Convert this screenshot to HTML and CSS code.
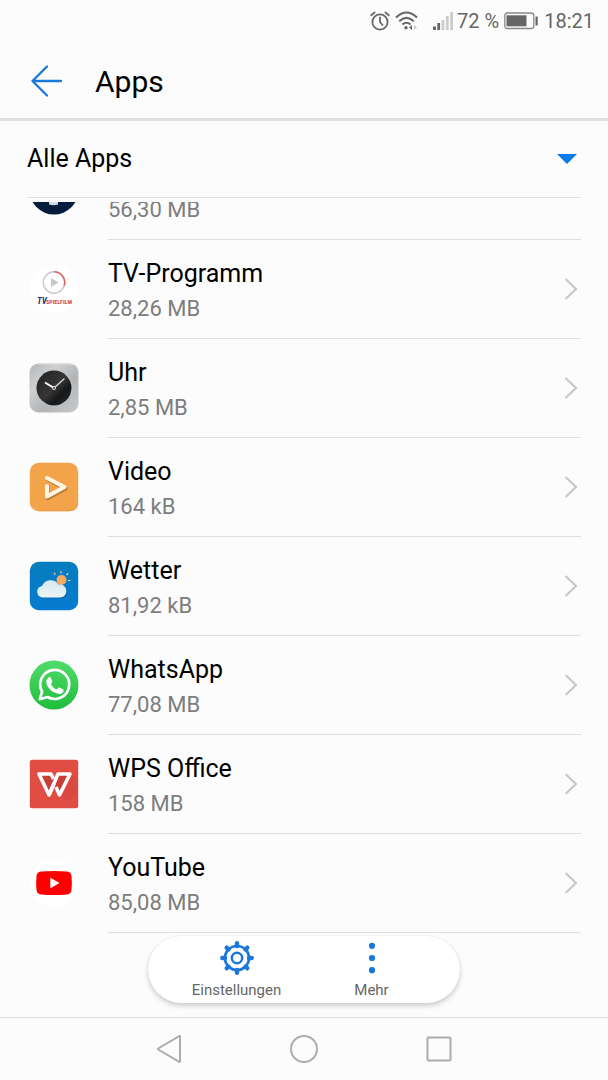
FILE: index.html
```html
<!DOCTYPE html>
<html lang="de">
<head>
<meta charset="utf-8">
<meta name="viewport" content="width=device-width, initial-scale=1">
<title>Apps</title>
<link rel="stylesheet" href="styles.css">
</head>
<body>
<div class="status">
  <svg width="20" height="20" viewBox="0 0 20 20" fill="none" stroke="#666" stroke-width="1.8" stroke-linecap="round"><circle cx="10" cy="11" r="7.6"/><path d="M10 6.500V11l2.500 3M1.200 4.200 4.600 1.500M18.800 4.200 15.400 1.500"/></svg>
  <svg class="wifi" width="23" height="20" viewBox="0 0 23 20" fill="none" stroke="#666" stroke-width="2"><path d="M1 6.500Q11.500-3.500 22 6.500M4.200 10.200Q11.500 3.500 18.800 10.200M7.500 13.500Q11.500 10 15.500 13.500"/><circle cx="11" cy="16.800" r="1.700" fill="#666" stroke="none"/><path d="M17 14v5l-3-2.500z" fill="#666" stroke="none"/><path d="M19 14v5l3-2.500z" fill="#ccc" stroke="none"/></svg>
  <svg width="20" height="18" viewBox="0 0 20 18"><path d="M0 14.500h3V18H0zM4.300 11h2.800v7H4.300z" fill="#666"/><path d="M8.600 8h2.800v10H8.600zM12.900 4h2.800v14h-2.800zM17.200 0H20v18h-2.800z" fill="#ccc"/></svg>
  <span class="percent">72 %</span>
  <svg class="battery" width="34" height="18" viewBox="0 0 34 18"><rect x=".8" y="1" width="29" height="15.500" rx="2.500" fill="none" stroke="#888" stroke-width="1.300"/><path d="M2.500 3.300h20v11h-20z" fill="#666"/><path d="M31.500 4.500h2.200v9h-2.200z" fill="#666"/></svg>
  <span>18:21</span>
</div>
<header class="header">
  <button class="back" type="button" aria-label="Zurück"><svg width="32" height="32" viewBox="0 0 32 32" fill="none" stroke="#1a78d8" stroke-width="2.300" stroke-linecap="round" stroke-linejoin="round"><path d="M30 16H1.500M16 1.500 1.500 16 16 30.500"/></svg></button>
  <h1 class="title">Apps</h1>
</header>
<div class="filter">
  <select class="filter-select" aria-label="Filter"><option>Alle Apps</option></select>
  <svg class="filter-arrow" width="20" height="10" viewBox="0 0 20 10"><path d="M0 0h20L10 10z" fill="#087bea"/></svg>
</div>
<main class="content">
  <ul class="list">
    <li class="row">
      <svg class="icon" viewBox="0 0 50 50"><circle cx="25" cy="25" r="24.500" fill="#051c3c"/><path d="M20 37h9v2.500q-4.500 1.500-9 0z" fill="#d5dbe3"/></svg>
      <a class="entry" href="#" aria-label="App"><span class="text"><span class="name"></span><span class="size">56,30 MB</span></span></a>
    </li>
    <li class="row">
      <svg class="icon" viewBox="0 0 50 50"><circle cx="25" cy="25" r="24" fill="#fff"/><circle cx="25" cy="18.500" r="10.700" fill="none" stroke="#c6c9cf" stroke-width="1.400"/><path d="M25 7.800a10.700 10.700 0 0 1 10.200 14" fill="none" stroke="#dc6661" stroke-width="1.600"/><path d="M22 14v9l7.500-4.500z" fill="#c3c6cb"/><text class="tv-logo" x="8" y="40" fill="#26336e">TV</text><text class="film-logo" x="17" y="40" fill="#d6473d">SPIELFILM</text></svg>
      <a class="entry" href="#"><span class="text"><span class="name">TV-Programm</span><span class="size">28,26 MB</span></span><svg class="chevron" viewBox="0 0 14 24"><path d="m1.500 2 10.500 10-10.500 10"/></svg></a>
    </li>
    <li class="row">
      <svg class="icon" viewBox="0 0 50 50"><defs><linearGradient id="steel" x2="1" y2="1"><stop stop-color="#b4b5b7"/><stop offset=".3" stop-color="#cfd0d2"/><stop offset=".6" stop-color="#b3b4b6"/><stop offset="1" stop-color="#c8c9cb"/></linearGradient><linearGradient id="dial" x2="1" y2="1"><stop stop-color="#202122"/><stop offset=".5" stop-color="#353536"/><stop offset=".7" stop-color="#161718"/><stop offset="1" stop-color="#303132"/></linearGradient></defs><rect x=".5" y=".5" width="49" height="49" rx="9" fill="url(#steel)"/><path d="M9 1h32q8 0 8.500 8" fill="none" stroke="#dedfe0"/><circle cx="25" cy="25" r="18.500" fill="#c7c8ca"/><circle cx="25" cy="25" r="17.500" fill="url(#dial)"/><path d="m25 25-8 8" stroke="#71312d" stroke-width=".8"/><path d="m25 25-9-5.500" stroke="#fff" stroke-width="2"/><path d="m25 25 10.500-9.500" stroke="#ddd" stroke-width="1.200"/><circle cx="25" cy="25" r="1.600" fill="#555" stroke="#eee" stroke-width=".8"/></svg>
      <a class="entry" href="#"><span class="text"><span class="name">Uhr</span><span class="size">2,85 MB</span></span><svg class="chevron" viewBox="0 0 14 24"><path d="m1.500 2 10.500 10-10.500 10"/></svg></a>
    </li>
    <li class="row">
      <svg class="icon" viewBox="0 0 50 50"><rect x=".8" y=".8" width="48.400" height="48.400" rx="9" fill="#f3a44b"/><path d="M9 48.700h32q7 0 7.700-7" fill="none" stroke="#e39a48"/><g fill="none" stroke-linecap="round" stroke-linejoin="round" stroke-width="4"><path d="M18 24v11l18-9.500-18-9.500" stroke="#ba7c36" transform="translate(.6 1.200)"/><path d="m18 16 17.500 9L18 34.500V24" stroke="#fff5e5"/></g></svg>
      <a class="entry" href="#"><span class="text"><span class="name">Video</span><span class="size">164 kB</span></span><svg class="chevron" viewBox="0 0 14 24"><path d="m1.500 2 10.500 10-10.500 10"/></svg></a>
    </li>
    <li class="row">
      <svg class="icon" viewBox="0 0 50 50"><defs><linearGradient id="sky" x2="0" y2="1"><stop stop-color="#057dbd"/><stop offset="1" stop-color="#067bd0"/></linearGradient><linearGradient id="cloud" x2="0" y2="1"><stop stop-color="#d5e9f4"/><stop offset="1" stop-color="#edf3f5"/></linearGradient></defs><rect x=".8" y=".8" width="48.400" height="48.400" rx="9" fill="url(#sky)"/><circle cx="32.500" cy="19" r="5" fill="#f8aa62"/><path d="m26.500 13.500-1.500-1.500M32 12.500V10M37.500 14l1.700-1.700M39 19.500h2.500" stroke="#f8d0a4" stroke-width="1.200"/><path d="M15 37.500h17c7 0 8.500-11 1-13.500h-3a9.500 9.500 0 0 0-16 1.500c-7 1.500-6 12 1 12z" fill="#075a97" opacity=".5"/><path d="M14.500 36.500H30.500c8.500 0 9-11.500 1.500-13h-2.500a9.300 9.300 0 0 0-16.500 1.500c-7 1.500-6 11.500 1.500 11.500z" fill="url(#cloud)"/></svg>
      <a class="entry" href="#"><span class="text"><span class="name">Wetter</span><span class="size">81,92 kB</span></span><svg class="chevron" viewBox="0 0 14 24"><path d="m1.500 2 10.500 10-10.500 10"/></svg></a>
    </li>
    <li class="row">
      <svg class="icon" viewBox="0 0 50 50"><defs><linearGradient id="green" x2="0" y2="1"><stop stop-color="#50dc6b"/><stop offset="1" stop-color="#20bd3c"/></linearGradient></defs><circle cx="25" cy="25" r="24.500" fill="url(#green)"/><path d="m10.800 39.200 2.300-7.600A14.500 14.500 0 1 1 18.500 37z" fill="none" stroke="#fff" stroke-width="2.700" stroke-linejoin="round"/><path d="M19.500 17.500c1-.7 2-.4 2.500.7l1.200 3c.3.900-.2 1.600-1.300 2.800 1.300 2.700 3.300 4.500 6 5.600 1.500-1.800 2-2.300 2.900-1.900l3.200 1.600c1.300.7.500 3.200-1.300 4.100-2 1-4.300.6-7.200-.8-3.900-1.900-7-5.600-8-8.900-.7-2.600.4-4.900 2-6.200z" fill="#fff"/></svg>
      <a class="entry" href="#"><span class="text"><span class="name">WhatsApp</span><span class="size">77,08 MB</span></span><svg class="chevron" viewBox="0 0 14 24"><path d="m1.500 2 10.500 10-10.500 10"/></svg></a>
    </li>
    <li class="row">
      <svg class="icon" viewBox="0 0 50 50"><rect x=".8" y=".8" width="48.400" height="48.400" rx="2.500" fill="#e14d43"/><path d="m42 14 6 7v14l-8 8-9-7z" fill="#ca4038" opacity=".3"/><path d="M11 15 19.500 35l5.500-13.500L22 15zM28 15l-4 9 6 11L41 15z" fill="#c73e36"/><g fill="none" stroke="#fff" stroke-width="3.600" stroke-linejoin="round"><path d="M25 24.500 20 36 10 15h12l2.500 5"/><path d="m27 28 3.500 8L41 15H29l-8.500 20"/></g></svg>
      <a class="entry" href="#"><span class="text"><span class="name">WPS Office</span><span class="size">158 MB</span></span><svg class="chevron" viewBox="0 0 14 24"><path d="m1.500 2 10.500 10-10.500 10"/></svg></a>
    </li>
    <li class="row">
      <svg class="icon" viewBox="0 0 50 50"><circle cx="25" cy="25" r="24" fill="#fff"/><path d="M12 13.500q13-1.200 26 0 4 .4 4.500 4.500.8 7 0 14-.5 4.200-4.500 4.500-13 1.200-26 0-4-.4-4.500-4.500-.8-7 0-14 .5-4.100 4.500-4.500z" fill="#fe0000"/><path d="m21.300 19.700 9.200 5.300-9.200 5.300z" fill="#fff"/></svg>
      <a class="entry" href="#"><span class="text"><span class="name">YouTube</span><span class="size">85,08 MB</span></span><svg class="chevron" viewBox="0 0 14 24"><path d="m1.500 2 10.500 10-10.500 10"/></svg></a>
    </li>
  </ul>
  <div class="toolbar">
    <button class="tool" type="button"><svg width="34" height="34" viewBox="0 0 34 34" fill="none" stroke="#1a78dc"><circle cx="17" cy="17" r="12" stroke-width="2.700"/><circle cx="17" cy="17" r="5.200" stroke-width="2.500"/><path d="M17 5V2.300M17 31.700V29M5 17H2.300M31.700 17H29M8.500 8.500 6.700 6.700M25.500 25.500l1.800 1.800M8.500 25.500l-1.800 1.800M25.500 8.500l1.800-1.800" stroke-width="4.400" stroke-linecap="round"/></svg>Einstellungen</button>
    <button class="tool" type="button"><svg width="34" height="34" viewBox="0 0 34 34" fill="#1a78dc"><circle cx="17" cy="4.800" r="3.100"/><circle cx="17" cy="17" r="3.100"/><circle cx="17" cy="29.200" r="3.100"/></svg>Mehr</button>
  </div>
</main>
<nav class="nav">
  <button class="nav-button" type="button" aria-label="Zurück"><svg width="30" height="30" viewBox="0 0 30 30"><path d="M26 2.500v25q0 .8-.8.400L4.200 15.500q-.6-.5 0-1L25.200 2.100q.8-.4.800.4z"/></svg></button>
  <button class="nav-button" type="button" aria-label="Startseite"><svg width="30" height="30" viewBox="0 0 30 30"><circle cx="15" cy="15" r="13"/></svg></button>
  <button class="nav-button" type="button" aria-label="Übersicht"><svg width="30" height="30" viewBox="0 0 30 30"><rect x="3.500" y="3.500" width="23" height="23" rx=".8"/></svg></button>
</nav>
</body>
</html>
```

FILE: styles.css
```css
* {
  box-sizing: border-box;
}

body {
  display: flex;
  flex-direction: column;
  height: 100vh;
  margin: 0;
  overflow: hidden;
  background: #fcfcfc;
  color: #000;
  font-family: Roboto, "Liberation Sans", sans-serif;
}

svg {
  display: block;
  flex: none;
}

button {
  margin: 0;
  padding: 0;
  border: 0;
  background: none;
  font-family: inherit;
}

.status {
  display: flex;
  flex: none;
  align-items: center;
  justify-content: flex-end;
  height: 42px;
  padding-right: 14px;
  color: #666;
  font-size: 20px;
  line-height: 24px;
}

.wifi {
  margin: 0 15px 0 5px;
}

.percent {
  margin-left: 4px;
}

.battery {
  margin: 0 6px 0 5px;
}

.header {
  display: flex;
  flex: none;
  align-items: center;
  gap: 32px;
  height: 79px;
  padding: 2px 0 0 31px;
  border-bottom: 3px solid #e1e1e1;
}

.title {
  margin: 2px 0 0;
  font-size: 30px;
  font-weight: 400;
  line-height: 36px;
}

.filter {
  display: flex;
  flex: none;
  align-items: center;
  height: 77px;
  margin: 0 27px 4px;
  padding-right: 4px;
  border-bottom: 1px solid #dedede;
}

.filter-select {
  flex: 1;
  height: 74px;
  padding: 0 0 2px;
  border: 0;
  appearance: none;
  background: none;
  color: #000;
  font-family: inherit;
  font-size: 25px;
}

.content {
  position: relative;
  flex: 1;
  min-height: 0;
}

.list {
  display: flex;
  flex-direction: column;
  justify-content: flex-end;
  height: 100%;
  margin: 0;
  padding: 0 27px 84px;
  overflow: hidden;
  list-style: none;
}

.row {
  display: flex;
  flex: none;
  align-items: center;
  gap: 29px;
  height: 99px;
  padding-left: 2px;
}

.icon {
  width: 50px;
  height: 50px;
  margin-bottom: 2px;
}

.entry {
  display: flex;
  flex: 1;
  align-items: center;
  justify-content: space-between;
  height: 99px;
  padding-right: 3px;
  border-bottom: 1px solid #dedede;
  color: inherit;
  text-decoration: none;
}

.text {
  display: flex;
  flex-direction: column;
  gap: 6px;
  padding-top: 4px;
}

.name {
  height: 30px;
  font-size: 25px;
  line-height: 30px;
}

.size {
  color: #7d7d7d;
  font-size: 22px;
  line-height: 28px;
}

.chevron {
  width: 14px;
  height: 24px;
  fill: none;
  stroke: #c8c8c8;
  stroke-width: 2.2;
}

.tv-logo,
.film-logo {
  font-family: "Liberation Sans Narrow", "Roboto Condensed", Roboto, sans-serif;
  font-weight: 700;
}

.tv-logo {
  font-size: 9px;
  font-style: italic;
}

.film-logo {
  font-size: 6px;
}

.toolbar {
  position: absolute;
  bottom: 14px;
  left: 50%;
  display: flex;
  padding: 5px 21px 4px;
  border-radius: 34px;
  background: #fff;
  box-shadow: 0 3px 5px rgba(0, 0, 0, 0.18), 0 0 2px rgba(0, 0, 0, 0.08);
  transform: translateX(-50%);
}

.tool {
  display: flex;
  flex-direction: column;
  align-items: center;
  gap: 6px;
  width: 135px;
  color: #666;
  font-size: 15px;
  line-height: 18px;
}

.nav {
  display: flex;
  flex: none;
  justify-content: center;
  height: 63px;
  border-top: 1px solid #dedede;
}

.nav-button {
  display: flex;
  align-items: center;
  justify-content: center;
  width: 135px;
}

.nav-button svg {
  fill: none;
  stroke: #adadad;
  stroke-width: 2;
}
```
